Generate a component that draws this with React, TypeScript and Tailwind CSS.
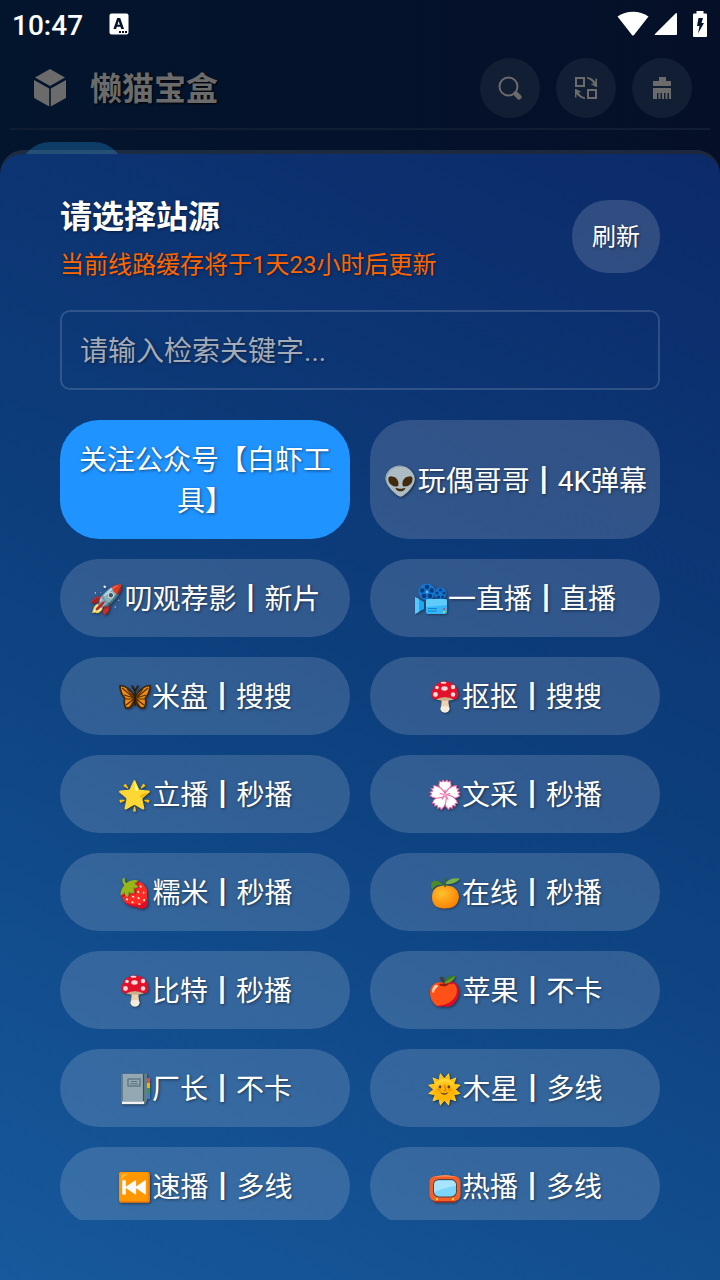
import { useState } from "react";
import type { ReactNode } from "react";

type Source = {
  icon?: ReactNode;
  name: string;
};

function Emoji({ children }: { children: ReactNode }) {
  return (
    <svg
      aria-hidden="true"
      viewBox="0 0 32 32"
      className="mx-px inline-block size-8 align-[-6px] drop-shadow-[1px_1px_1px_rgba(0,0,0,0.4)]">
      {children}
    </svg>
  );
}

const camera = (
  <Emoji>
    <path d="M0 14 9 19V26L0 31Z" fill="#1da7f2" />
    <path d="M0 14 4 16V29L0 31Z" fill="#57c8fb" />
    <circle cx="12" cy="9" r="8.500" fill="#1476d2" />
    <g fill="#0b3d7d">
      <circle cx="12" cy="4" r="2.300" />
      <circle cx="7.300" cy="7.500" r="2.300" />
      <circle cx="9" cy="13" r="2.300" />
      <circle cx="15" cy="13" r="2.300" />
      <circle cx="16.700" cy="7.500" r="2.300" />
    </g>
    <circle cx="12" cy="9" r="1.300" fill="#5cc4fa" />
    <circle cx="25.500" cy="10.500" r="6" fill="#1476d2" />
    <g fill="#0b3d7d">
      <circle cx="25.500" cy="7" r="1.600" />
      <circle cx="22" cy="10" r="1.600" />
      <circle cx="29" cy="10" r="1.600" />
      <circle cx="23.500" cy="14" r="1.600" />
      <circle cx="27.500" cy="14" r="1.600" />
    </g>
    <rect x="11" y="16" width="21" height="15" rx="2" fill="#35b6f7" />
    <path d="M13 16h17q2 0 2 2v4L11 24v-6q0-2 2-2Z" fill="#5fcbfb" />
    <path d="M13 25.500h9M13 28h9" stroke="#1682c8" />
    <circle cx="29" cy="26" r="1" fill="#e53935" />
    <circle cx="29" cy="29" r="1" fill="#c6e82e" />
  </Emoji>
);

const butterfly = (
  <Emoji>
    <g fill="#f08a12" stroke="#3b2409" strokeWidth="1.600" strokeLinejoin="round">
      <path d="M15.500 16Q10 5 1 4.500 1 12 6 17.500Q4 22 7 27 13 28 15.500 19Z" />
      <path d="M16.500 16Q22 5 31 4.500 31 12 26 17.500Q28 22 25 27 19 28 16.500 19Z" />
    </g>
    <path
      d="M15 17 3 7M15 17 8 8M15 17 5 14M15 18 7 18M15 18 7 24M15 19 11 26M17 17 29 7M17 17 24 8M17 17 27 14M17 18 25 18M17 18 25 24M17 19 21 26"
      stroke="#4d2e0a"
      strokeWidth="1.100"
    />
    <path d="M16 9v15M16 10 13 5M16 10 19 5" stroke="#2c1b08" strokeWidth="1.600" strokeLinecap="round" />
  </Emoji>
);

const mushroom = (
  <Emoji>
    <path d="M12.500 16h7q-.5 6 1 12-1 3.500-4.500 3.500T11.500 28q1.500-6 1-12Z" fill="#ecd3ae" />
    <path d="M12 26q4-2 8 0l.5 2q-1 3.500-4.500 3.500T11.500 28Z" fill="#f4ecdd" />
    <path d="M2.500 14Q3.500 1 16 0.500 28.500 1 29.500 14 29 18.500 24 18.500 16 15 8 18.500 3 18.500 2.500 14Z" fill="#e3122c" />
    <path d="M7 18.500Q16 14 25 18.500 16 21 7 18.500Z" fill="#cdb08c" />
    <g fill="#ffdcd8">
      <ellipse cx="15.500" cy="7.500" rx="3.200" ry="2.200" />
      <circle cx="8" cy="6.500" r="1.800" />
      <circle cx="24" cy="6" r="2.200" />
      <circle cx="6.500" cy="13.500" r="2.400" />
      <circle cx="24" cy="13.500" r="2.200" />
      <ellipse cx="14.500" cy="1.800" rx="3" ry="1" />
    </g>
  </Emoji>
);

const blossom = (
  <Emoji>
    <g fill="#fff" stroke="#e8639f" strokeWidth="1">
      {[0, 72, 144, 216, 288].map((deg) => (
        <path
          key={deg}
          transform={`rotate(${deg} 16 16)`}
          d="M16 17Q8 10 10.500 2L13 3 14 0.800 16 3 18 0.800 19 3 21.500 2Q24 10 16 17Z"
        />
      ))}
    </g>
    <g stroke="#ef6fa9" strokeWidth="1.200" strokeLinecap="round">
      {[0, 72, 144, 216, 288].map((deg) => (
        <path key={deg} transform={`rotate(${deg} 16 16)`} d="M16 16V11" />
      ))}
    </g>
    <circle cx="16" cy="16" r="1.800" fill="#f6a5c8" />
  </Emoji>
);

const tangerine = (
  <Emoji>
    <defs>
      <radialGradient id="peel" cx="0.38" cy="0.35" r="0.7">
        <stop offset="0" stopColor="#ffc12e" />
        <stop offset="1" stopColor="#f97f00" />
      </radialGradient>
    </defs>
    <path d="M3 20Q3 8.500 16 8.500T30 20Q29 31.500 16 31.500T3 20Z" fill="url(#peel)" />
    <path d="M15 9Q9 1 3 5 1 9 3 13 8 6 15 9Z" fill="#4b8b2b" />
    <path d="M16 7Q20 0 31 1.500 26 8 16 7Z" fill="#79b343" />
    <path d="M16 10Q17 4 14.500 1.500" stroke="#3f6d22" strokeWidth="1.600" fill="none" />
  </Emoji>
);

const notebook = (
  <Emoji>
    <path d="M27 5h4v5h-4Z" fill="#e84a3b" />
    <path d="M27 10h4v5.500h-4Z" fill="#f6b400" />
    <path d="M27 15.500h4V21h-4Z" fill="#2c9b4b" />
    <path d="M27 21h4v5h-4Z" fill="#3b78e7" />
    <path d="M2 2q0-1.500 2-1.500h24v27L26 31.500H4q-2 0-2-2Z" fill="#607d88" />
    <path d="M4 1h20v27H4Z" fill="#93a8b2" />
    <path d="M3 28.500h22v2.500H3Z" fill="#f2f2f2" />
    <path d="M24.500 1v27" stroke="#39505b" strokeWidth="1.200" />
    <rect x="9" y="6" width="12" height="7" fill="none" stroke="#56707c" strokeWidth="1.200" />
    <path d="M12 8.500h6M11 10.800h8" stroke="#56707c" />
  </Emoji>
);

const television = (
  <Emoji>
    <path d="M13 5 11.500 0.500M19 5 20.500 0.500" stroke="#0f7fc0" strokeWidth="1.600" />
    <path d="M5 31.500v-3h22v3Z" fill="#b52e0b" />
    <rect x="0.500" y="5" width="31" height="25" rx="6" fill="#f4602c" />
    <path d="M5 6Q16 2 27 6 16 5 5 6Z" fill="#ff8e5c" />
    <rect x="4" y="8" width="24" height="18.500" rx="6" fill="#5b4034" />
    <rect x="5" y="9" width="22" height="16.500" rx="5" fill="#7dd5fb" />
    <path d="M8 10h16q3 1 3 5-10 1-22 6v-6q0-5 3-5Z" fill="#a9e4fd" />
    <circle cx="8" cy="28" r="1.200" fill="#ffd43a" />
    <circle cx="24" cy="28" r="1.200" fill="#ffd43a" />
  </Emoji>
);

const sources: Source[] = [
  { name: "关注公众号【白虾工具】" },
  { name: "👽玩偶哥哥┃4K弹幕" },
  { name: "🚀叨观荐影┃新片" },
  { icon: camera, name: "一直播┃直播" },
  { icon: butterfly, name: "米盘┃搜搜" },
  { icon: mushroom, name: "抠抠┃搜搜" },
  { name: "🌟立播┃秒播" },
  { icon: blossom, name: "文采┃秒播" },
  { name: "🍓糯米┃秒播" },
  { icon: tangerine, name: "在线┃秒播" },
  { icon: mushroom, name: "比特┃秒播" },
  { name: "🍎苹果┃不卡" },
  { icon: notebook, name: "厂长┃不卡" },
  { name: "🌞木星┃多线" },
  { name: "⏮️速播┃多线" },
  { icon: television, name: "热播┃多线" },
];

function StatusBar() {
  return (
    <div className="flex h-12 items-center justify-between pl-3 pr-[13px] text-white">
      <div className="flex items-center gap-[26px]">
        <span className="pt-[3px] text-[28px] font-medium leading-[48px]">10:47</span>
        <svg width="20" height="22" viewBox="0 0 20 22">
          <rect x="0.5" y="0.5" width="19" height="21" rx="2" fill="#fff" />
          <path d="M8.2 5h3L15 16h-2.8l-.7-2.2H7.8L7.1 16H4.4Zm1.5 3-1.2 3.8h2.3Z" fill="#04122b" />
          <path d="M10 18h2v2h-2zM13 18h2v2h-2zM16 18h2v2h-2z" fill="#04122b" />
        </svg>
      </div>
      <div className="flex items-center">
        <svg width="32" height="26" viewBox="0 0 32 26" fill="#fff">
          <path d="M0.5 5.500C9-1 23-1 31.500 5.500L17 24q-1 1-2 0Z" />
        </svg>
        <svg className="ml-[5px]" width="23" height="24" viewBox="0 0 23 24" fill="#fff">
          <path d="M23 1.500v20.500q0 1-1 1H1.500q-1.500 0-.5-1L21.500 1.500q1-1 1.500 0Z" />
        </svg>
        <svg className="ml-4" width="14" height="26" viewBox="0 0 14 26">
          <path d="M3.500 0h7v2.500H13q1 0 1 1V25q0 1-1 1H1q-1 0-1-1V3.500q0-1 1-1h2.500Z" fill="#fff" />
          <path d="M5.500 7h4.500L8.500 12H11L5 22.500 6.500 15H4Z" fill="#04122b" />
        </svg>
      </div>
    </div>
  );
}

function RoundButton({ label, children }: { label: string; children: ReactNode }) {
  return (
    <button
      type="button"
      aria-label={label}
      className="flex size-[60px] items-center justify-center rounded-full bg-[#121e34] text-[#6b6b6b]">
      {children}
    </button>
  );
}

function Header() {
  return (
    <header className="mx-[10px] flex h-[82px] items-center justify-between border-b-2 border-[#101d32] pl-[22px] pr-[18px]">
      <div className="flex items-center gap-[22px] text-[#6b6b6b]">
        <svg width="36" height="40" viewBox="0 0 36 40" fill="currentColor">
          <path d="M18 1 33 9.500 18 18 3 9.500Z" />
          <path d="M2 12 17.200 20.500V38.500L3 30.500Q2 30 2 29Z" />
          <path d="M34 12 18.800 20.500V38.500L33 30.500Q34 30 34 29Z" />
        </svg>
        <h1 className="pt-[2px] text-[32px] font-bold leading-[48px] [text-shadow:1px_1px_2px_#000]">懒猫宝盒</h1>
      </div>
      <div className="flex gap-4">
        <RoundButton label="搜索">
          <svg width="24" height="24" viewBox="0 0 24 24" fill="none" stroke="currentColor">
            <circle cx="10.500" cy="10.500" r="9" strokeWidth="2" />
            <path d="m16 16 2 2" strokeWidth="2" />
            <path d="m18 18 3 3" strokeWidth="5" strokeLinecap="round" />
          </svg>
        </RoundButton>
        <RoundButton label="切换站源">
          <svg width="24" height="24" viewBox="0 0 24 24" fill="none" stroke="currentColor" strokeWidth="2">
            <path d="M2 2h8v8H2zM14 14h8v8h-8z" />
            <path
              d="M13 1q5 .5 8.500 5V2.500H23V11h-1L16.500 8l3-.5Q17 3.500 13 2.500ZM11 23q-5-.5-8.500-5v3.500H1V13h1l5.500 3-3 .5Q7 20.500 11 21.500Z"
              fill="currentColor"
              stroke="none"
            />
          </svg>
        </RoundButton>
        <RoundButton label="清理缓存">
          <svg width="20" height="24" viewBox="0 0 20 24" fill="currentColor">
            <path d="M7 1h7v4h5v5H1V5h6ZM1 12h18v11h-2v-6h-1.500v6h-2v-6H12v6h-2v-6H8.500v6h-2v-6H5v6H1Z" />
          </svg>
        </RoundButton>
      </div>
    </header>
  );
}

export default function App() {
  const [active, setActive] = useState(0);
  const [keyword, setKeyword] = useState("");

  return (
    <div className="flex h-screen flex-col overflow-hidden bg-linear-to-r from-[#03152d] to-[#050f28] font-[Roboto,'Noto_Sans_CJK_SC','Noto_Color_Emoji',sans-serif]">
      <StatusBar />
      <Header />

      {/* Category tabs, mostly covered by the sheet */}
      <div className="h-6 shrink-0 overflow-hidden px-5 pt-3">
        <div className="h-[60px] w-[104px] rounded-full bg-[#0d3c66]" />
      </div>

      <section
        role="dialog"
        aria-labelledby="sheet-title"
        className="relative -mt-1 flex min-h-0 flex-1 flex-col rounded-t-3xl border-t-4 border-white/10 bg-linear-205 from-[#0c2a69] via-[#0d407e] to-[#17599c] bg-clip-padding px-[60px] pb-[60px] pt-10 text-white [text-shadow:1px_1px_3px_rgba(0,0,0,0.5)]">
        <div className="flex items-start justify-between pt-[6px]">
          <div>
            <h2 id="sheet-title" className="text-[32px] font-bold leading-[34px]">请选择站源</h2>
            <p className="mt-[15px] text-2xl leading-8 text-[#ff6600]">当前线路缓存将于1天23小时后更新</p>
          </div>
          <button type="button" className="h-[73px] rounded-[36px] bg-white/15 px-5 text-2xl [text-shadow:inherit]">
            刷新
          </button>
        </div>

        <input
          type="text"
          aria-label="检索关键字"
          value={keyword}
          onChange={(e) => setKeyword(e.target.value)}
          placeholder="请输入检索关键字..."
          className="mt-[29px] h-20 w-full shrink-0 rounded-[10px] border-2 border-white/15 bg-transparent px-[18px] pt-[2px] text-[28px] outline-none placeholder:text-[#a3abb8] [text-shadow:inherit]"
        />

        <div className="mt-[30px] grid min-h-0 flex-1 auto-rows-max grid-cols-2 gap-5 overflow-hidden">
          {sources.map(({ icon, name }, i) => (
            <button
              key={name}
              type="button"
              onClick={() => setActive(i)}
              className={`rounded-[39px] px-[10px] pb-[17px] pt-5 text-[28px] leading-[41px] [text-shadow:inherit] ${
                i === active ? "bg-[#1f93ff]" : "bg-white/15"
              }`}>
              {icon}
              {name}
            </button>
          ))}
        </div>
      </section>
    </div>
  );
}
